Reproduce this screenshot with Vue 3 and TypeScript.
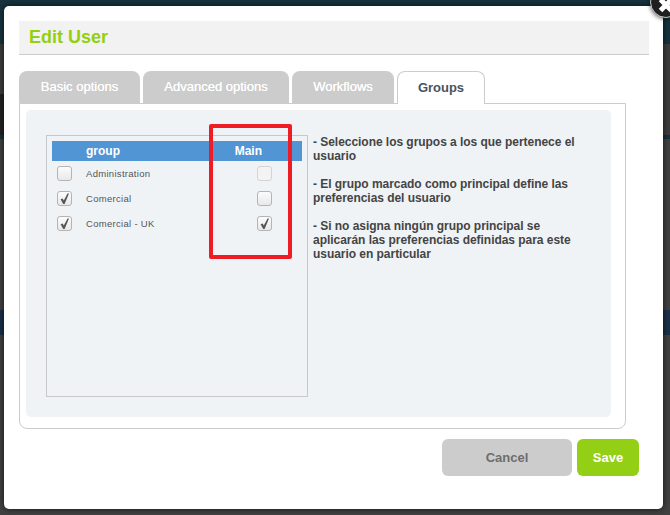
<script setup lang="ts">
interface Row { name: string; checked: boolean; main: boolean; faint?: boolean }
const rows: Row[] = [
  { name: 'Administration', checked: false, main: false, faint: true },
  { name: 'Comercial', checked: true, main: false },
  { name: 'Comercial - UK', checked: true, main: true },
]
const tabs = ['Basic options', 'Advanced options', 'Workflows']
const notes = [
  '- Seleccione los grupos a los que pertenece el usuario',
  '- El grupo marcado como principal define las preferencias del usuario',
  '- Si no asigna ningún grupo principal se aplicarán las preferencias definidas para este usuario en particular',
]
const tick = 'M2.6 7.2 L4.6 6.6 L5.8 8.4 L9.6 1.4 L11 1.4 L6.6 12 L5.2 12 Z'
</script>

<template>
  <div class="stage">
    <div class="backdrop">
      <div class="side">
        <div class="s-teal h44"></div>
        <div class="s-grey h50"></div>
        <div class="s-black h41"></div>
        <div class="s-teal h4"></div>
        <div class="s-grey2 h171"></div>
        <div class="s-navy h25"></div>
        <div class="s-grey2 fill"></div>
      </div>
      <div class="side">
        <div class="s-teal h44"></div>
        <div class="s-grey h91"></div>
        <div class="s-teal h4"></div>
        <div class="s-grey2 h171"></div>
        <div class="s-navy h25"></div>
        <div class="s-grey2 fill"></div>
      </div>
    </div>
    <div class="modal">
      <h1 class="title">Edit User</h1>
      <div class="tabs">
        <div v-for="t in tabs" :key="t" class="tab">{{ t }}</div>
        <div class="tab active">Groups</div>
      </div>
      <div class="frame">
        <div class="panel">
          <div class="list">
            <div class="head">
              <span class="c-name">group</span>
              <span class="c-main">Main</span>
            </div>
            <div v-for="r in rows" :key="r.name" class="row">
              <span class="box">
                <svg v-if="r.checked" viewBox="0 0 13 13" width="13" height="13"><path :d="tick" fill="#555"/></svg>
              </span>
              <span class="name">{{ r.name }}</span>
              <span class="box main" :class="{ faint: r.faint }">
                <svg v-if="r.main" viewBox="0 0 13 13" width="13" height="13"><path :d="tick" fill="#555"/></svg>
              </span>
            </div>
          </div>
          <div class="notes">
            <p v-for="n in notes" :key="n">{{ n }}</p>
          </div>
        </div>
      </div>
      <div class="actions">
        <button class="btn cancel">Cancel</button>
        <button class="btn save">Save</button>
      </div>
      <div class="redbox"></div>
    </div>
    <div class="close">
      <svg viewBox="0 0 20 20" width="20" height="20"><path d="M4.5 4.5 L15.5 15.5 M15.5 4.5 L4.5 15.5" stroke="#fff" stroke-width="5"/></svg>
    </div>
  </div>
</template>

<style>
html, body { margin: 0; padding: 0; overflow: hidden; }
</style>

<style scoped>
.stage {
  position: relative;
  width: 670px;
  height: 515px;
  overflow: hidden;
  font-family: "Liberation Sans", Arial, sans-serif;
}
.backdrop {
  position: absolute;
  inset: 0;
  display: flex;
  justify-content: space-between;
  background: #17333f;
}
.side { width: 335px; display: flex; flex-direction: column; }
.s-teal { background: #17333f; }
.s-grey { background: #3d3d3f; }
.s-black { background: #232323; }
.s-grey2 { background: #414141; }
.s-navy { background: #1a3148; }
.h44 { height: 44px; }
.h50 { height: 50px; }
.h41 { height: 41px; }
.h91 { height: 91px; }
.h4 { height: 4px; }
.h171 { height: 171px; }
.h25 { height: 25px; }
.fill { flex: 1; }
.modal {
  position: absolute;
  left: 4px;
  top: 6px;
  width: 659px;
  height: 503px;
  box-sizing: border-box;
  padding: 15px 14px 0 15px;
  background: #fff;
  border-radius: 5px;
  box-shadow: 0 0 6px rgba(0, 0, 0, 0.7);
}
.title {
  margin: 0;
  height: 33px;
  line-height: 33px;
  padding-left: 10px;
  font-size: 18px;
  font-weight: 700;
  color: #94cf10;
  background: #f2f2f2;
  border-bottom: 1px solid #cccccc;
}
.tabs { display: flex; gap: 3px; margin-top: 16px; height: 32px; }
.tab {
  box-sizing: border-box;
  height: 32px;
  line-height: 32px;
  text-align: center;
  background: #cccccc;
  color: #fff;
  font-size: 13px;
  text-shadow: 0 0 0.6px #fff;
  border-radius: 8px 8px 0 0;
}
.tab:nth-child(1) { width: 121px; }
.tab:nth-child(2) { width: 146px; }
.tab:nth-child(3) { width: 102px; }
.tab.active {
  position: relative;
  z-index: 1;
  width: 88px;
  height: 33px;
  background: #fff;
  color: #4a5260;
  font-weight: 700;
  text-shadow: none;
  border: 1px solid #ccc;
  border-bottom: none;
  line-height: 31px;
}
.frame {
  box-sizing: border-box;
  width: 607px;
  height: 326px;
  padding: 6px 14px 11px 6px;
  border: 1px solid #ccc;
  border-radius: 0 0 8px 8px;
}
.panel {
  box-sizing: border-box;
  height: 100%;
  padding: 25px 20px 20px 20px;
  background: #eff3f6;
  border-radius: 5px;
  display: flex;
  gap: 5px;
}
.list {
  box-sizing: border-box;
  flex: none;
  width: 262px;
  height: 262px;
  padding: 5px;
  border: 1px solid #c8c8c8;
}
.head {
  display: flex;
  height: 20px;
  line-height: 20px;
  background: #5295d5;
  color: #fff;
  font-size: 12px;
  font-weight: 700;
}
.c-name { margin-left: 34px; }
.c-main { margin-left: auto; margin-right: 40px; }
.row {
  display: flex;
  align-items: center;
  height: 25px;
  padding-left: 5px;
  font-size: 9.5px;
  color: #555;
}
.name { margin-left: 14px; letter-spacing: 0.3px; }
.box {
  box-sizing: border-box;
  width: 15px;
  height: 15px;
  border: 1px solid #b4b4b4;
  border-radius: 3px;
  background: linear-gradient(#fbfbfb, #e9e9e9);
  display: flex;
  align-items: center;
  justify-content: center;
}
.box.main { margin-left: auto; margin-right: 30px; }
.box.faint { border-color: #d4d4d4; background: #f3f3f3; }
.notes {
  flex: 1;
  font-size: 12px;
  font-weight: 700;
  line-height: 14px;
  letter-spacing: -0.04px;
  color: #444;
}
.notes p { margin: 0 0 14px; }
.actions {
  display: flex;
  justify-content: flex-end;
  gap: 5px;
  margin-top: 10px;
  margin-right: 10px;
}
.btn {
  border: none;
  height: 37px;
  border-radius: 6px;
  font-family: inherit;
  font-size: 13px;
  font-weight: 700;
  padding: 0;
}
.cancel { width: 130px; background: #ccc; color: #6d6d6d; }
.save { width: 62px; background: #93cf14; color: #fff; }
.redbox {
  position: absolute;
  left: 205px;
  top: 118px;
  width: 83px;
  height: 135px;
  box-sizing: border-box;
  border: 4px solid #ee1c25;
  border-radius: 2px;
}
.close {
  position: absolute;
  left: 650px;
  top: -14px;
  width: 32px;
  height: 32px;
  box-sizing: border-box;
  background: #1f1f1f;
  border: 1px solid #ccc;
  border-radius: 50%;
  display: flex;
  align-items: center;
  justify-content: center;
  padding-top: 5px;
  box-shadow: 0 1px 4px rgba(0,0,0,0.6);
}
</style>
